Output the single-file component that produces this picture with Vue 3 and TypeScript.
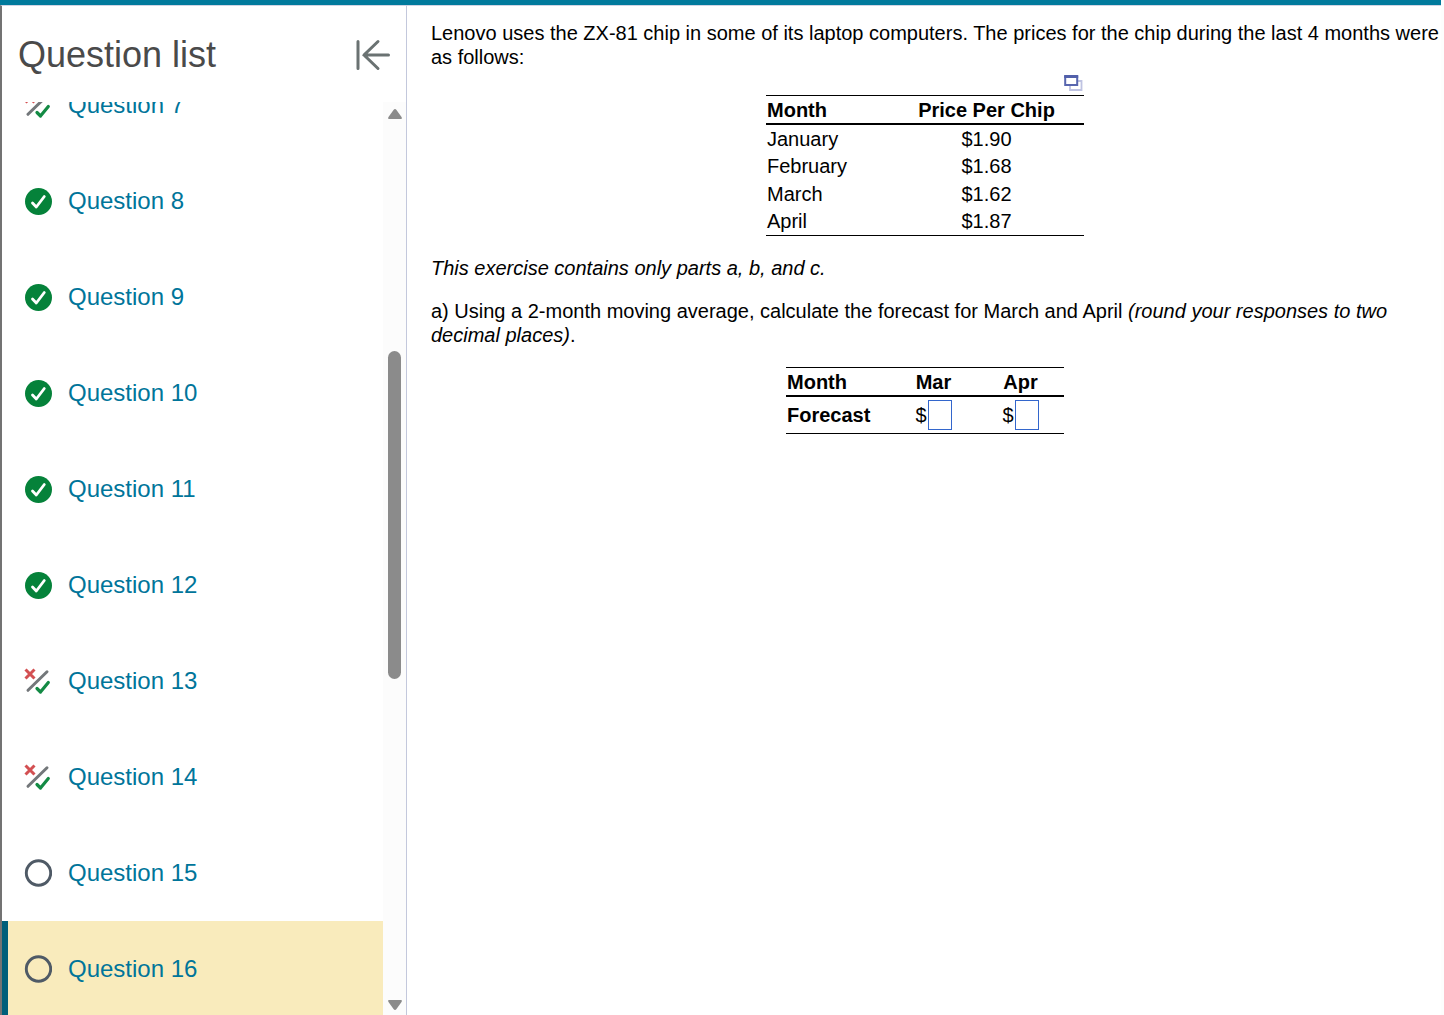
<script setup lang="ts">
import { ref } from 'vue'

type Status = 'correct' | 'partial' | 'open'

interface Question {
  id: number
  status: Status
}

const current = 16

const questions: Question[] = [
  { id: 7, status: 'partial' },
  { id: 8, status: 'correct' },
  { id: 9, status: 'correct' },
  { id: 10, status: 'correct' },
  { id: 11, status: 'correct' },
  { id: 12, status: 'correct' },
  { id: 13, status: 'partial' },
  { id: 14, status: 'partial' },
  { id: 15, status: 'open' },
  { id: 16, status: 'open' },
]

const prices = [
  { month: 'January', price: '$1.90' },
  { month: 'February', price: '$1.68' },
  { month: 'March', price: '$1.62' },
  { month: 'April', price: '$1.87' },
]

const march = ref('')
const april = ref('')
</script>

<template>
  <div class="frame">
    <aside class="sidebar">
      <header class="sidebar-head">
        <h1>Question list</h1>
        <button type="button" class="collapse" aria-label="Collapse question list">
          <svg width="36" height="32" viewBox="0 0 36 32" fill="none" stroke="#6a7272" stroke-width="3" stroke-linecap="round">
            <path d="M3 2.500V29.500M33.500 16H9M23 2.500L9 16L23 29.500" />
          </svg>
        </button>
      </header>
      <div class="scroller">
        <nav class="list-view">
          <ul>
            <li v-for="q in questions" :key="q.id" :class="{ current: q.id === current }">
              <a href="#">
                <svg v-if="q.status === 'correct'" width="28" height="28" viewBox="0 0 28 28" fill="none">
                  <circle cx="14.500" cy="14.500" r="13.500" fill="#05823a" />
                  <path d="M8.500 16L12.300 20L20.300 9.500" stroke="#fff" stroke-width="2.800" stroke-linecap="round" stroke-linejoin="round" />
                </svg>
                <svg v-else-if="q.status === 'partial'" width="28" height="28" viewBox="0 0 28 28" fill="none">
                  <path d="M1.500 2.500L10.500 11.500M10.500 2.500L1.500 11.500" stroke="#d35052" stroke-width="3" />
                  <path d="M4 23.300L23 4.800" stroke="#73777a" stroke-width="3" stroke-linecap="round" />
                  <path d="M13 21.500L16.500 25L24.300 15.500" stroke="#138a44" stroke-width="3.200" stroke-linecap="round" stroke-linejoin="round" />
                </svg>
                <svg v-else width="28" height="28" viewBox="0 0 28 28" fill="none">
                  <circle cx="14.500" cy="14" r="12.200" stroke="#4f5a66" stroke-width="2.900" />
                </svg>
                <span>Question {{ q.id }}</span>
              </a>
            </li>
          </ul>
        </nav>
        <div class="track" aria-hidden="true">
          <svg width="14" height="10" viewBox="0 0 14 10"><path d="M1 10Q-.500 10 .5 8L5.500 1Q7 -.8 8.500 1L13.500 8Q14.500 10 13 10Z" fill="#8b8b8b" /></svg>
          <div class="rail">
            <div class="before"></div>
            <div class="thumb"></div>
            <div class="after"></div>
          </div>
          <svg width="14" height="10" viewBox="0 0 14 10"><path d="M1 0Q-.500 0 .5 2L5.500 9Q7 10.800 8.500 9L13.500 2Q14.500 0 13 0Z" fill="#8b8b8b" /></svg>
        </div>
      </div>
    </aside>

    <main>
      <p class="intro">
        Lenovo uses the ZX-81 chip in some of its laptop computers. The prices for the chip during the last 4 months
        were as follows:
      </p>

      <div class="price-block">
        <button type="button" class="popout" aria-label="Open table data">
          <svg width="19" height="16" viewBox="0 0 19 16" fill="none">
            <path d="M6 6H17.500V15H6Z" fill="#fff" stroke="#bfc3e2" stroke-width="1.800" />
            <path d="M1.200 1.500H13.200V10H1.200Z" fill="#fff" stroke="#5866ae" stroke-width="2" />
            <path d="M.2 1.500H14.200" stroke="#5260aa" stroke-width="3" />
          </svg>
        </button>
        <table class="prices">
          <thead>
            <tr>
              <th scope="col">Month</th>
              <th scope="col" class="mid">Price Per Chip</th>
            </tr>
          </thead>
          <tbody>
            <tr v-for="row in prices" :key="row.month">
              <td>{{ row.month }}</td>
              <td class="mid">{{ row.price }}</td>
            </tr>
          </tbody>
        </table>
      </div>

      <p class="note"><em>This exercise contains only parts a, b, and c.</em></p>

      <p class="part">
        a) Using a 2-month moving average, calculate the forecast for March and April
        <em>(round your responses to two decimal places)</em>.
      </p>

      <table class="forecast">
        <thead>
          <tr>
            <th scope="col">Month</th>
            <th scope="col" class="mid">Mar</th>
            <th scope="col" class="mid">Apr</th>
          </tr>
        </thead>
        <tbody>
          <tr>
            <th scope="row">Forecast</th>
            <td>
              <label class="answer">$<input v-model="march" type="text" aria-label="March forecast" /></label>
            </td>
            <td>
              <label class="answer">$<input v-model="april" type="text" aria-label="April forecast" /></label>
            </td>
          </tr>
        </tbody>
      </table>
    </main>
  </div>
</template>

<style>
body {
  margin: 0;
  background: #fdfdfd;
}
</style>

<style scoped>
.frame {
  box-sizing: border-box;
  display: flex;
  height: 100vh;
  margin-right: 3px;
  overflow: hidden;
  border-top: 5px solid #007a9c;
  background: #fff;
  font-family: "Liberation Sans", Arial, sans-serif;
  font-size: 20px;
  line-height: 24px;
  color: #000;
}

.sidebar {
  box-sizing: border-box;
  display: flex;
  flex: none;
  flex-direction: column;
  width: 407px;
  border-top: 1px solid #d0d4e4;
  border-right: 1px solid #c3c8dc;
  border-left: 2px solid #737373;
}

.sidebar-head {
  box-sizing: border-box;
  display: flex;
  flex: none;
  align-items: center;
  justify-content: space-between;
  height: 96px;
  padding: 2px 15px 0 16px;
}

h1 {
  margin: 0;
  font-size: 36px;
  font-weight: 400;
  line-height: 48px;
  color: #4a4a4a;
}

button {
  display: block;
  padding: 0;
  border: 0;
  background: none;
  cursor: pointer;
}

svg {
  display: block;
  flex: none;
}

.scroller {
  display: flex;
  flex: 1;
  min-height: 0;
}

.list-view {
  flex: 1;
  overflow: hidden;
}

ul {
  margin: -45px 0 0;
  padding: 0;
  list-style: none;
}

li {
  border-left: 6px solid transparent;
}

li.current {
  border-left-color: #005f7a;
  background: #f9ebbc;
}

li a {
  display: flex;
  align-items: center;
  gap: 16px;
  height: 96px;
  padding-left: 16px;
  font-size: 24px;
  color: #00759a;
  text-decoration: none;
}

.track {
  box-sizing: border-box;
  display: flex;
  flex: none;
  flex-direction: column;
  align-items: center;
  width: 23px;
  padding: 7px 0 5px;
  background: #fcfcfc;
}

.rail {
  display: flex;
  flex: 1;
  flex-direction: column;
  width: 13px;
}

.before {
  flex: 232;
}

.thumb {
  flex: 328;
  border-radius: 7px;
  background: #8b8b8b;
}

.after {
  flex: 321;
}

main {
  flex: 1;
  padding: 15px 22px 0 24px;
  border-top: 1px solid #d0d4e4;
}

p {
  margin: 0;
}

.intro,
.part {
  margin-right: -22px;
}

.price-block {
  width: 318px;
  margin: 6px auto 0;
}

.popout {
  margin: 0 1px 4px auto;
}

table {
  border-collapse: separate;
  border-spacing: 0;
  border-top: 1px solid #000;
  border-bottom: 1px solid #000;
}

th,
td {
  padding: 0 1px;
  text-align: left;
}

thead th {
  height: 27px;
  border-bottom: 2px solid #000;
}

.mid {
  text-align: center;
}

.prices {
  width: 100%;
}

.prices tbody td {
  height: 27px;
}

.prices tbody tr:nth-child(even) td {
  height: 28px;
}

.prices th:first-child {
  width: 120px;
}

.prices .mid {
  padding-right: 0;
}

.note {
  margin-top: 20px;
}

.part {
  margin-top: 19px;
}

.forecast {
  width: 278px;
  margin: 20px auto 0;
  table-layout: fixed;
}

.forecast th:first-child {
  width: 102px;
}

.forecast tbody th,
.forecast tbody td {
  height: 36px;
}

.answer {
  display: flex;
  align-items: center;
  justify-content: center;
}

.answer input {
  box-sizing: border-box;
  width: 24px;
  height: 30px;
  margin-left: 1px;
  padding: 0 2px;
  border: 1px solid #3366cc;
  font: inherit;
}
</style>
